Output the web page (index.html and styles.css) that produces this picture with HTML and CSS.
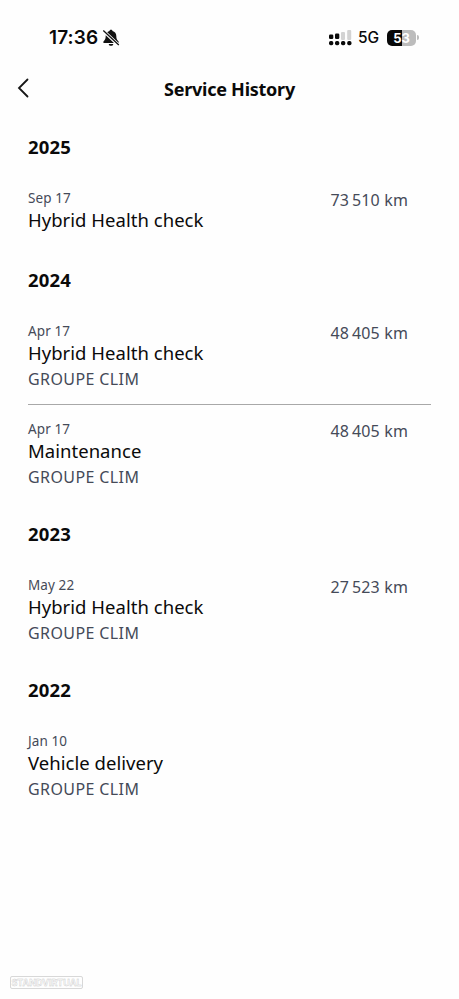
FILE: index.html
```html
<!DOCTYPE html>
<html lang="en">
<head>
<meta charset="utf-8">
<meta name="viewport" content="width=device-width, initial-scale=1">
<title>Service History</title>
<link rel="stylesheet" href="styles.css">
</head>
<body>
<div class="status">
  <span class="time">17:36</span>
  <svg class="bell" width="18" height="18" viewBox="0 0 18 18" aria-hidden="true">
    <path d="M9 .8c-.9 0-1.400.5-1.500 1.200C5.100 2.600 3.700 4.500 3.700 7c0 3-.8 4-2 5.200-.8.800-.5 1.700.4 1.700h13.800c.9 0 1.200-.9.400-1.700C15.100 11 14.300 10 14.300 7c0-2.500-1.400-4.400-3.800-5C10.400 1.300 9.900.8 9 .8zM6.700 14.900h4.600c-.2 1.200-1 1.900-2.300 1.900s-2.100-.7-2.300-1.900z"/>
    <path class="bell-gap" d="M1 1.500 17 16.500"/>
    <path class="bell-slash" d="M1.300 1.500 16.800 16"/>
  </svg>
  <svg class="signal" width="23" height="17" viewBox="0 0 23 17" aria-hidden="true">
    <g class="bars"><rect x="12" y="3" width="4" height="8" rx="1"/><rect x="18.200" y="1" width="4" height="10" rx="1"/></g>
    <rect x="0" y="5.500" width="4.300" height="4.500" rx="1.300"/><rect x="6" y="4.500" width="4.300" height="5.500" rx="1.300"/>
    <rect x="0" y="12" width="4.300" height="4.300" rx="1.700"/><rect x="6" y="12" width="4.300" height="4.300" rx="1.700"/><rect x="12" y="12" width="4.300" height="4.300" rx="1.700"/><rect x="18.200" y="12" width="4.300" height="4.300" rx="1.700"/>
  </svg>
  <span class="network">5G</span>
  <span class="battery">53</span><span class="battery-cap"></span>
</div>
<header class="header">
  <svg class="back" width="14" height="20" viewBox="0 0 14 20" aria-hidden="true"><path d="M10.500 1.500 2 10l8.500 8.500"/></svg>
  <h1>Service History</h1>
</header>
<main>
  <section>
    <h2>2025</h2>
    <article><div><p class="date">Sep 17</p><p class="title">Hybrid Health check</p></div><p class="km">73&#8198;510 km</p></article>
  </section>
  <section>
    <h2>2024</h2>
    <article><div><p class="date">Apr 17</p><p class="title">Hybrid Health check</p><p class="dealer">GROUPE CLIM</p></div><p class="km">48&#8198;405 km</p></article>
    <hr>
    <article><div><p class="date">Apr 17</p><p class="title">Maintenance</p><p class="dealer">GROUPE CLIM</p></div><p class="km">48&#8198;405 km</p></article>
  </section>
  <section>
    <h2>2023</h2>
    <article><div><p class="date">May 22</p><p class="title">Hybrid Health check</p><p class="dealer">GROUPE CLIM</p></div><p class="km">27&#8198;523 km</p></article>
  </section>
  <section>
    <h2>2022</h2>
    <article><div><p class="date">Jan 10</p><p class="title">Vehicle delivery</p><p class="dealer">GROUPE CLIM</p></div></article>
  </section>
</main>
<footer class="mark">STANDVIRTUAL</footer>
</body>
</html>
```
FILE: styles.css
```css
* { box-sizing: border-box; }
body {
  margin: 0;
  height: 999px;
  display: flex;
  flex-direction: column;
  overflow: hidden;
  background: #fefefe;
  color: #0a0a0a;
  font-family: "Noto Sans", "Open Sans", sans-serif;
}
h1, h2, p { margin: 0; white-space: nowrap; }
.status {
  display: flex;
  align-items: center;
  height: 60px;
  padding: 15px 40px 0 49px;
  font-family: Inter, sans-serif;
}
.time { width: 53px; font-size: 19px; font-weight: 600; letter-spacing: .1px; }
.bell path { fill: #111; }
.bell .bell-gap { fill: none; stroke: #fefefe; stroke-width: 3.200; }
.bell .bell-slash { fill: none; stroke: #111; stroke-width: 1.300; }
.signal { margin-left: auto; fill: #0a0a0a; }
.bars { fill: #d3d3d3; }
.network { width: 22px; margin: 0 7px 0 6px; font-size: 15.500px; font-weight: 500; }
.battery {
  width: 29px;
  height: 16px;
  border-radius: 5px;
  background: linear-gradient(90deg, #080808 53%, #bcbcbc 53%);
  color: #fff;
  font-size: 13px;
  font-weight: 700;
  line-height: 16px;
  text-align: center;
}
.battery-cap { width: 2px; height: 5px; margin-left: 1px; border-radius: 0 2px 2px 0; background: #bbb; }
.header { display: grid; grid-template-columns: 60px 1fr 60px; align-items: center; height: 60px; }
.back { margin: -4px 0 0 17px; fill: none; stroke: #161616; stroke-width: 1.800; stroke-linecap: round; }
h1 { margin-top: -2px; text-align: center; font-size: 18px; line-height: 24px; font-weight: 700; letter-spacing: -.25px; }
main { flex: 1; padding: 15px 28px 0; }
section { margin-bottom: 33px; }
h2 { margin-bottom: 29px; font-size: 18.500px; line-height: 24px; font-weight: 700; letter-spacing: .15px; }
article { display: flex; justify-content: space-between; padding-right: 23px; }
.date { font-size: 13.500px; line-height: 20px; letter-spacing: .1px; color: #454a58; }
.title { padding-bottom: 4px; font-size: 18.500px; line-height: 23px; letter-spacing: .03px; }
.dealer { font-size: 16px; line-height: 23px; letter-spacing: .4px; color: #454a58; }
.km { font-size: 16px; line-height: 24px; letter-spacing: .15px; color: #454a58; }
hr { height: 1px; margin: 13px 0 14px; border: 0; background: #a8a8a8; }
.mark {
  width: 73px;
  height: 13px;
  margin: 0 0 10px 10px;
  border: 1px solid #d8d8d8;
  border-radius: 2px;
  color: #fefefe;
  font: 700 9px/11px Inter, sans-serif;
  text-align: center;
  -webkit-text-stroke: .4px #c8c8c8;
}
```
